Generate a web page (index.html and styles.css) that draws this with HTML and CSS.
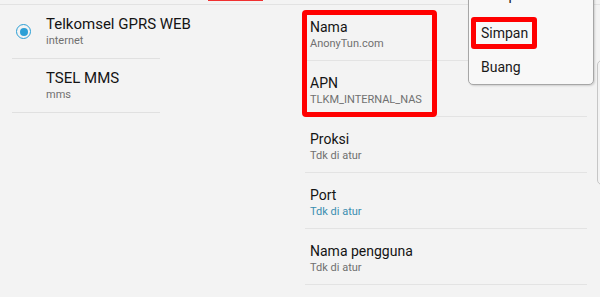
FILE: index.html
```html
<!DOCTYPE html>
<html lang="id">
<head>
  <meta charset="UTF-8">
  <meta name="viewport" content="width=device-width, initial-scale=1.0">
  <title>APN</title>
  <link rel="stylesheet" href="styles.css">
</head>
<body>
  <div class="topbar"><span class="tab-mark"></span></div>
  <div class="main">
    <div class="apn-list">
      <div class="apn-item">
        <span class="radio on"></span>
        <div class="apn-text">
          <div class="title">Telkomsel GPRS WEB</div>
          <div class="sub">internet</div>
        </div>
      </div>
      <div class="apn-item">
        <span class="radio off"></span>
        <div class="apn-text">
          <div class="title">TSEL MMS</div>
          <div class="sub">mms</div>
        </div>
      </div>
    </div>
    <div class="detail">
      <div class="highlight">
        <div class="row">
          <div class="title">Nama</div>
          <div class="sub">AnonyTun.com</div>
        </div>
        <div class="row">
          <div class="title">APN</div>
          <div class="sub">TLKM_INTERNAL_NAS</div>
        </div>
      </div>
      <div class="row">
        <div class="title">Proksi</div>
        <div class="sub">Tdk di atur</div>
      </div>
      <div class="row">
        <div class="title">Port</div>
        <div class="sub blue">Tdk di atur</div>
      </div>
      <div class="row">
        <div class="title">Nama pengguna</div>
        <div class="sub">Tdk di atur</div>
      </div>
    </div>
  </div>

  <!-- menu overflow -->
  <div class="menu">
    <div class="menu-item first">Tampilkan</div>
    <div class="menu-item marked">Simpan</div>
    <div class="menu-item">Buang</div>
  </div>
  <div class="edge"></div>
</body>
</html>
```

FILE: styles.css
```css
*, *::before, *::after { margin:0; padding:0; box-sizing:border-box; }
body {
  font-family: Roboto, 'Noto Sans', sans-serif;
  background:#f3f3f3;
  width:600px; height:297px;
  overflow:hidden;
  position:relative;
  color:#141414;
}
.topbar {
  height:5px;
  border-bottom:1px solid #e2e2e2;
  display:flex;
}
.tab-mark {
  width:55px; height:1px;
  margin-left:208px;
  background:#f03030;
}
.main { display:flex; }

.title { font-size:14px; line-height:17px; white-space:nowrap; }
.sub { font-size:11px; line-height:14px; margin-top:1px; color:#707070; white-space:nowrap; }
.sub.blue { color:#3a8eb0; }

/* left list */
.apn-list { width:300px; }
.apn-item {
  display:flex; align-items:flex-start;
  margin-left:12px; width:148px;
  padding:11px 0 10px 0;
  border-bottom:1px solid #e0e0e0;
}
.apn-item .title { font-size:15px; }
.radio {
  width:15px; height:15px; flex-shrink:0;
  margin:8px 15px 0 4px;
  border:1.5px solid #2b9fd6;
  border-radius:50%;
  display:flex; align-items:center; justify-content:center;
}
.radio::after {
  content:''; width:8px; height:8px;
  border-radius:50%; background:#2b9fd6;
}
.radio.off { visibility:hidden; }

/* right details */
.detail { width:282px; margin-left:5px; }
.row {
  padding:14px 0 9px 5px;
  border-bottom:1px solid #e3e3e3;
}
.highlight { position:relative; }
.highlight::after {
  content:''; position:absolute;
  top:5px; left:-3px; width:135px; height:107px;
  border:5px solid #ff0000; border-radius:4px;
}

/* overflow menu */
.menu {
  position:absolute; left:468px; top:-19px;
  width:126px;
  background:#f8f8f8;
  border:1px solid #a6a6a6; border-radius:5px;
  box-shadow:1px 1px 2px rgba(0,0,0,0.15);
}
.menu-item {
  height:34px; line-height:34px;
  padding-left:12px;
  font-size:14px; color:#1a1a1a;
}
.menu-item.first { line-height:27px; }
.menu-item.marked { position:relative; }
.menu-item.marked::after {
  content:''; position:absolute;
  left:2px; top:1px; width:66px; height:32px;
  border:5px solid #ff0000; border-radius:3px;
}
.edge {
  position:absolute; left:597px; top:60px;
  width:12px; height:125px;
  border:1px solid #c6c6c6; border-radius:5px;
}
```
